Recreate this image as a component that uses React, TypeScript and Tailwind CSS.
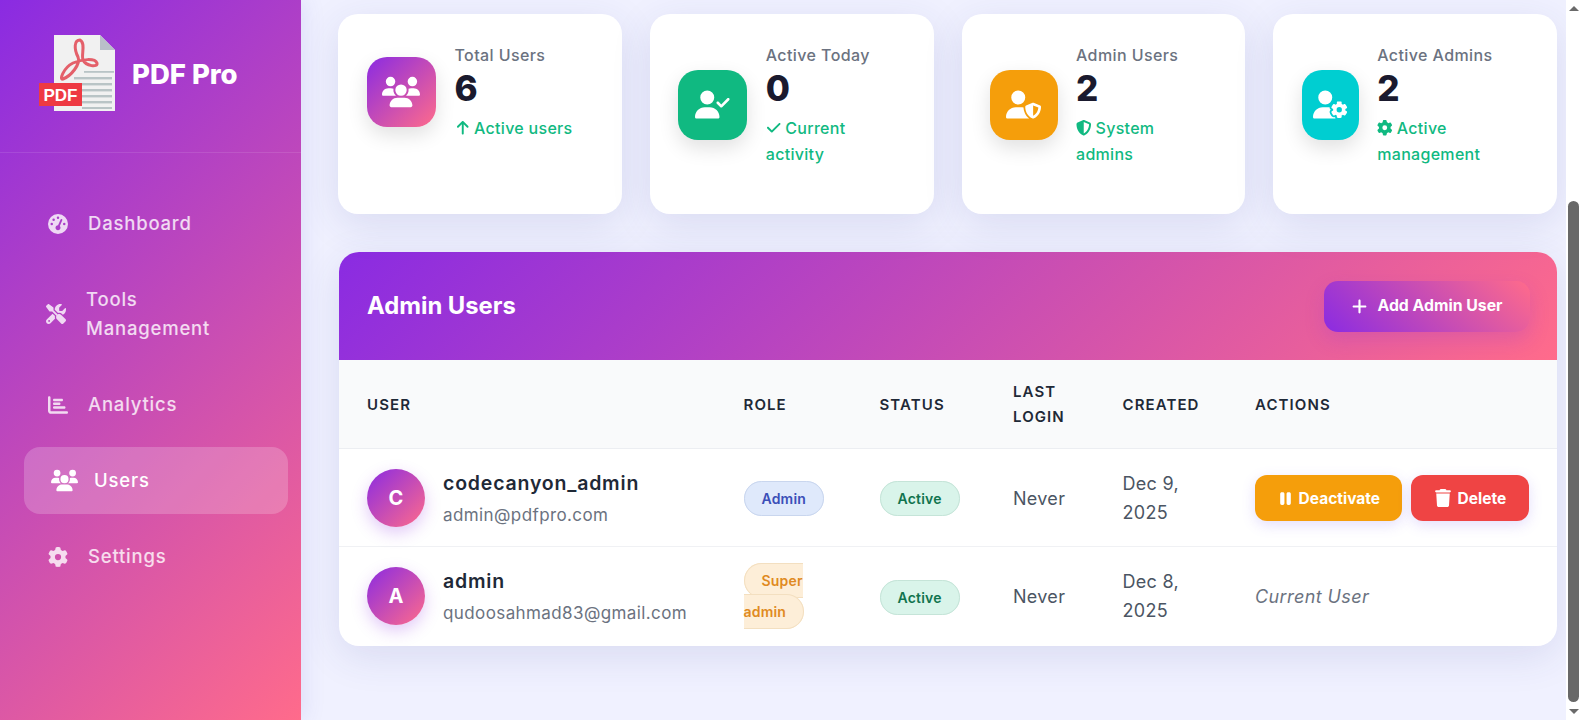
import React from "react";
import { FaGaugeHigh, FaScrewdriverWrench, FaChartBar, FaUsers, FaGear, FaUserCheck, FaUserShield, FaUserGear, FaShieldHalved, FaCheck, FaArrowUp, FaPlus, FaPause, FaTrash } from "react-icons/fa6";

const grad = "bg-[linear-gradient(135deg,#8a2be2,#ff6b8b)]";

function Logo() {
  return (
    <svg width="78" height="78" viewBox="0 0 78 78" className="shrink-0">
      <path d="M16 0 H62 L77 15 V76 H16 Z" fill="#f1f1f1" />
      <path d="M62 0 L77 15 H62 Z" fill="#b9bfc9" />
      <g fill="none" stroke="#e4606a" strokeWidth="3">
        <path d="M42 5 C36 5 36 14 40 22 C43 29 33 41 25 44 C21 46 25 33 35 28 C44 24 57 23 59 28 C60 33 48 31 45 25 C43 20 48 8 42 5 Z" />
      </g>
      <g fill="#b9c4c6">
        <rect x="46" y="36" width="30" height="1.8" />
        <rect x="36" y="42" width="38" height="2.4" />
        <rect x="44" y="48" width="30" height="2.4" />
        <rect x="44" y="54" width="30" height="2.4" />
        <rect x="44" y="60" width="30" height="2.4" />
        <rect x="44" y="66" width="30" height="2.4" />
        <rect x="44" y="72" width="30" height="2" />
      </g>
      <rect x="1" y="48" width="43" height="23" fill="#ee3a43" />
      <text x="22.5" y="66" textAnchor="middle" fill="#fff" fontSize="17" fontWeight="700" fontFamily="'Liberation Sans',sans-serif">PDF</text>
    </svg>
  );
}

function NavItem({ icon, label, active, iconClass }: { icon: React.ReactNode; label: string; active?: boolean; iconClass?: string }) {
  return (
    <a className={`flex items-center gap-5 rounded-2xl pl-[30px] pr-[40px] py-[19px] w-[264px] text-[18.5px] leading-[29px] tracking-[0.8px] font-medium ${active ? "translate-x-1.5 bg-white/20 text-white" : "text-white/80"}`}>
      <span className={`w-5 h-5 shrink-0 flex items-center justify-center [&>svg]:shrink-0 ${iconClass ?? "text-[20px]"}`}>{icon}</span>
      <span>{label}</span>
    </a>
  );
}

function Stat({ icon, iconBg, iconW, label, value, sub, subIcon }: { icon: React.ReactNode; iconBg: string; iconW: string; label: string; value: string; sub: string; subIcon: React.ReactNode }) {
  return (
    <div className="bg-white rounded-[20px] p-[28.5px] h-[200px] flex items-start shadow-[0_10px_40px_rgba(50,60,140,0.12)]">
      <div className="flex gap-[18.5px] items-center w-full">
        <div className={`h-[70px] shrink-0 rounded-[20px] flex items-center justify-center text-white text-[35px] shadow-[0_8px_20px_rgba(0,0,0,0.12)] ${iconW} ${iconBg}`}>{icon}</div>
        <div className="flex-1 min-w-0 pr-[4px]">
          <div className="text-[16px] leading-[25px] tracking-[0.4px] text-[#6b7280] font-medium whitespace-nowrap">{label}</div>
          <div className="text-[35px] leading-[40px] mb-[7px] font-extrabold text-[#1a1a2e]">{value}</div>
          <div className="text-[16px] leading-[26px] tracking-[0.3px] font-medium text-[#10b981]">
            <span className="inline-block mr-[4px] align-[-2px] text-[15.5px]">{subIcon}</span>
            {sub}
          </div>
        </div>
      </div>
    </div>
  );
}

const th = "text-left px-7 pt-[1px] text-[15px] leading-[25px] font-semibold tracking-[1.1px] uppercase text-[#1f2937] align-middle";
const td = "px-7 pt-[2px] align-middle";
const tdLast = "px-7 align-middle";

function User({ letter, name, email }: { letter: string; name: string; email: string }) {
  return (
    <div className="flex items-center gap-[18px]">
      <div className={`h-[58px] w-[58px] rounded-full flex items-center justify-center text-white font-bold text-[20px] shadow-[0_6px_16px_rgba(138,43,226,0.25)] ${grad}`}>{letter}</div>
      <div>
        <div className="text-[19.5px] leading-[30px] font-semibold text-[#1f2937] tracking-[0.8px]">{name}</div>
        <div className="text-[17px] leading-[28px] mt-[3px] text-[#6b7280] tracking-[0.4px]">{email}</div>
      </div>
    </div>
  );
}

function Badge({ className, children }: { className: string; children: React.ReactNode }) {
  return <span className={`inline px-[17px] py-[8px] rounded-full border text-[14px] tracking-[0.2px] leading-[30px] font-semibold ${className}`}>{children}</span>;
}

export default function App() {
  return (
    <div className="flex h-screen overflow-hidden bg-[#f0f1ff] font-['Inter',sans-serif]">
      <aside className={`w-[301px] shrink-0 h-full flex flex-col ${grad} shadow-[4px_0_20px_rgba(67,67,200,0.1)]`}>
        <div className="h-[153px] shrink-0 border-b border-white/10 pl-[38px] pt-[35px] flex items-start gap-4">
          <Logo />
          <span className="text-white font-extrabold text-[27.5px] leading-[78px]">PDF Pro</span>
        </div>
        <nav className="pt-[37px] pl-[18px] flex flex-col gap-[9px]">
          <NavItem icon={<FaGaugeHigh />} label="Dashboard" />
          <NavItem icon={<FaScrewdriverWrench />} label="Tools Management" iconClass="text-[20px] -ml-[2px]" />
          <NavItem icon={<FaChartBar />} label="Analytics" />
          <NavItem icon={<FaUsers />} label="Users" iconClass="text-[27px]" active />
          <NavItem icon={<FaGear />} label="Settings" />
        </nav>
      </aside>

      <main className="flex-1 min-w-0 pl-[37px] pr-[9px] pt-[14px]">
        <div className="grid grid-cols-4 gap-[28px] mb-[38px]">
          <Stat icon={<span className="text-[38px]"><FaUsers /></span>} iconBg={grad} iconW="w-[69.5px]" label="Total Users" value="6" subIcon={<FaArrowUp />} sub="Active users" />
          <Stat icon={<FaUserCheck />} iconBg="bg-[#10b981]" iconW="w-[69px]" label="Active Today" value="0" subIcon={<FaCheck />} sub="Current activity" />
          <Stat icon={<FaUserShield />} iconBg="bg-[#f59e0b]" iconW="w-[67.5px]" label="Admin Users" value="2" subIcon={<FaShieldHalved />} sub="System admins" />
          <Stat icon={<FaUserGear />} iconBg="bg-[#00ced1]" iconW="w-[57px]" label="Active Admins" value="2" subIcon={<FaGear />} sub="Active management" />
        </div>

        <section className="rounded-[20px] overflow-hidden bg-white shadow-[0_10px_40px_rgba(50,60,140,0.12)] ml-px">
          <header className={`h-[108px] flex items-center justify-between pl-7 pr-[27px] ${grad}`}>
            <h2 className="text-white font-bold text-[23.8px]">Admin Users</h2>
            <button className="h-[51px] w-[206px] rounded-[14px] flex items-center justify-center gap-[9px] text-white font-bold text-[15.8px] bg-[linear-gradient(45deg,#8a2be2,#ff6b8b)] shadow-[0_8px_20px_rgba(138,43,226,0.2)]">
              <FaPlus className="text-[17px]" /> Add Admin User
            </button>
          </header>
          <table className="w-full table-fixed border-collapse">
            <colgroup>
              <col className="w-[376.5px]" />
              <col className="w-[136px]" />
              <col className="w-[133.5px]" />
              <col className="w-[109.5px]" />
              <col className="w-[132.5px]" />
              <col />
            </colgroup>
            <thead>
              <tr className="h-[88px] bg-[#f9fafb] border-b border-[#eceef2]">
                <th className={th}>User</th>
                <th className={th}>Role</th>
                <th className={th}>Status</th>
                <th className={th}>Last Login</th>
                <th className={th}>Created</th>
                <th className={th}>Actions</th>
              </tr>
            </thead>
            <tbody className="text-[18px] leading-[29px] tracking-[0.3px] text-[#4b5563]">
              <tr className="h-[98px] border-b border-[#f0f1f4]">
                <td className={td}><User letter="C" name="codecanyon_admin" email="admin@pdfpro.com" /></td>
                <td className={td}><Badge className="bg-[#dfe9fb] border-[#c9d6ee] text-[#3b4fb8]">Admin</Badge></td>
                <td className={td}><Badge className="bg-[#d9f4ea] border-[#c5e4d8] text-[#11744f]">Active</Badge></td>
                <td className={td}>Never</td>
                <td className={td}>Dec 9, 2025</td>
                <td className={td}>
                  <div className="flex gap-[9px]">
                    <button className="h-[46px] w-[147px] rounded-xl bg-[#f59e0b] text-white font-bold tracking-normal text-[15.5px] flex items-center justify-center gap-[5px] shadow-[0_4px_14px_rgba(120,90,240,0.2)]"><FaPause className="text-[17px]" /> Deactivate</button>
                    <button className="h-[46px] w-[118.5px] rounded-xl bg-[#ef4444] text-white font-bold tracking-normal text-[15.5px] flex items-center justify-center gap-[6px] shadow-[0_4px_14px_rgba(120,90,240,0.2)]"><FaTrash className="text-[18px]" /> Delete</button>
                  </div>
                </td>
              </tr>
              <tr className="h-[100px]">
                <td className={tdLast}><User letter="A" name="admin" email="qudoosahmad83@gmail.com" /></td>
                <td className={tdLast}><Badge className="bg-[#fdeed8] border-[#f3dfc0] text-[#e08a22]">Super admin</Badge></td>
                <td className={td}><Badge className="bg-[#d9f4ea] border-[#c5e4d8] text-[#11744f]">Active</Badge></td>
                <td className={tdLast}>Never</td>
                <td className={tdLast}>Dec 8, 2025</td>
                <td className={tdLast}><span className="italic text-[#6b7280] tracking-[0.4px]">Current User</span></td>
              </tr>
            </tbody>
          </table>
        </section>
      </main>

      <div className="w-[15px] shrink-0 h-full bg-white flex flex-col items-center">
        <div className="h-[17px] flex items-center justify-center">
          <div className="w-0 h-0 border-x-[5px] border-x-transparent border-b-[5px] border-b-[#6a6a6a]" />
        </div>
        <div className="flex-1 w-full flex flex-col pt-[184px] pb-[1px] items-center">
          <div className="w-[11px] flex-1 rounded-full bg-[#686868]" />
        </div>
        <div className="h-[17px] flex items-center justify-center">
          <div className="w-0 h-0 border-x-[5px] border-x-transparent border-t-[5px] border-t-[#6a6a6a]" />
        </div>
      </div>
    </div>
  );
}
